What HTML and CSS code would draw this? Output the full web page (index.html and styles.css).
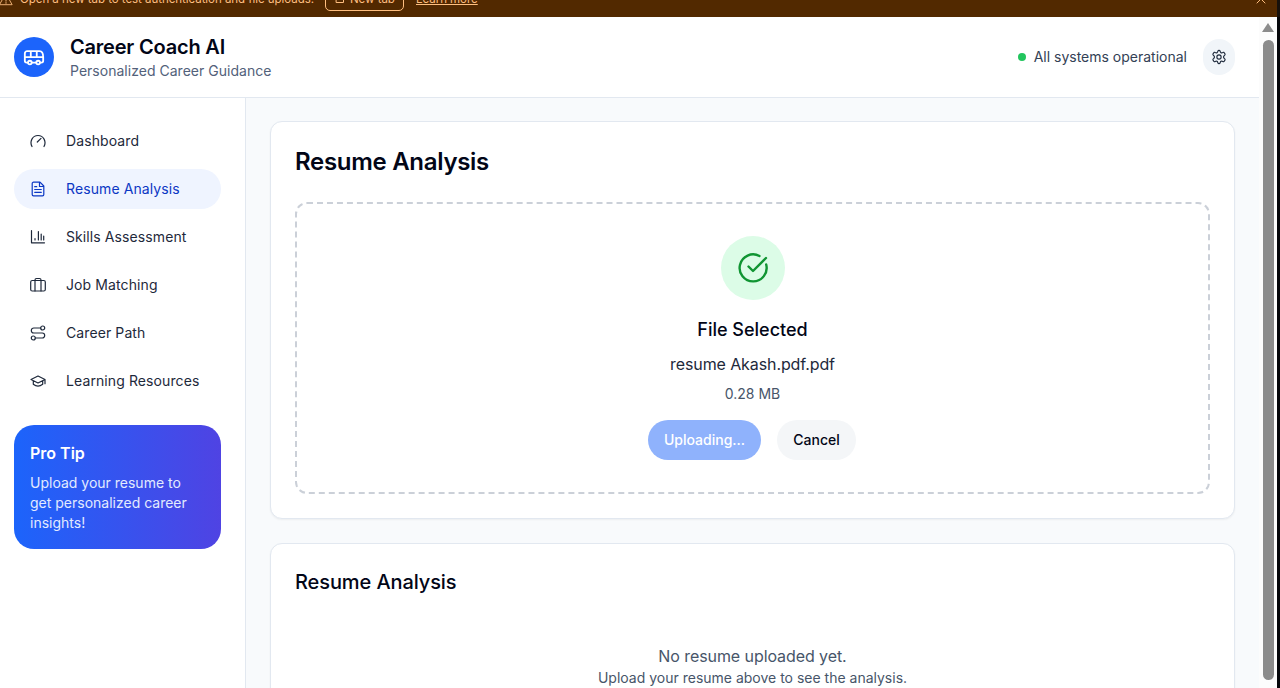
FILE: index.html
```html
<!DOCTYPE html>
<html lang="en">
<head>
<meta charset="utf-8">
<title>Career Coach AI</title>
<link rel="stylesheet" href="styles.css">
</head>
<body>
<div class="screen">
  <div class="banner">
    <div class="banner-row">
      <svg class="banner-warn" viewBox="0 0 16 16"><path d="M8 2 15 14.500H1ZM8 6.500v4M8 12v1"/></svg>
      <span class="banner-text">Open a new tab to test authentication and file uploads.</span>
      <span class="banner-button"><svg viewBox="0 0 10 10"><path d="M1.500 1.500h7v7h-7z"/></svg><span>New tab</span></span>
      <a class="banner-link">Learn more</a>
      <svg class="banner-close" viewBox="0 0 10 10"><path d="m1 1 8 8M9 1 1 9"/></svg>
    </div>
  </div>
  <div class="viewport">
    <div class="page">
      <header class="header">
        <div class="logo"><svg viewBox="0 0 24 24"><path d="M5.500 17H4a2 2 0 0 1-2-2V7a2.500 2.500 0 0 1 2.500-2.500H18c2.500 0 4 3 4 6.500v4a2 2 0 0 1-2 2h-1.500M9.500 17h5M2 11h20M8.500 4.500V11M15 4.500V11"/><circle cx="7.500" cy="17" r="2"/><circle cx="16.500" cy="17" r="2"/></svg></div>
        <div class="brand"><div class="brand-name">Career Coach AI</div><div class="brand-sub">Personalized Career Guidance</div></div>
        <span class="status-dot"></span>
        <span class="status">All systems operational</span>
        <button class="settings"><svg viewBox="0 0 24 24"><path d="M10.300 3.200a1.800 1.800 0 0 1 3.400 0l.3 1a1.900 1.900 0 0 0 2.700 1.500l1-.5a1.700 1.700 0 0 1 2.400.7l.8 1.400a1.800 1.800 0 0 1-.5 2.300l-.7.600a2.300 2.300 0 0 0 0 3.600l.7.600a1.800 1.800 0 0 1 .5 2.300l-.8 1.400a1.700 1.700 0 0 1-2.400.7l-1-.5a1.900 1.900 0 0 0-2.700 1.500l-.3 1a1.800 1.800 0 0 1-3.400 0l-.3-1a1.900 1.900 0 0 0-2.700-1.500l-1 .5a1.700 1.700 0 0 1-2.400-.7l-.8-1.400a1.800 1.800 0 0 1 .5-2.300l.7-.6a2.300 2.300 0 0 0 0-3.600l-.7-.6a1.800 1.800 0 0 1-.5-2.300l.8-1.400a1.700 1.700 0 0 1 2.400-.7l1 .5A1.900 1.900 0 0 0 10 4.200z"/><circle cx="12" cy="12" r="3.200"/></svg></button>
      </header>
      <div class="body">
        <aside class="sidebar">
          <nav class="nav">
            <a class="nav-item"><svg viewBox="0 0 16 16"><path d="M2 13.500C-.7 8.500 2.500 2.500 8 2.500s8.700 6 6 11M7.300 9l3.700-3.700"/></svg><span>Dashboard</span></a>
            <a class="nav-item active"><svg viewBox="0 0 16 16"><path d="M10 1.200H3.500a1.300 1.300 0 0 0-1.300 1.300v11a1.300 1.300 0 0 0 1.300 1.300h9a1.300 1.300 0 0 0 1.300-1.300V5L10 1.200M9.500 1.200V5.500h4.300M4.700 5.700h2M4.700 8.500h6.600M4.700 11.300h6.600"/></svg><span>Resume Analysis</span></a>
            <a class="nav-item"><svg viewBox="0 0 16 16"><path d="M1.500 1.500v12.300h13M5 11V9.500M8.400 11V2.500M11.200 11V5M13.700 11V7"/></svg><span>Skills Assessment</span></a>
            <a class="nav-item"><svg viewBox="0 0 16 16"><rect x=".7" y="3.500" width="14.600" height="10.500" rx="1.500"/><path d="M5 14V3a1.500 1.500 0 0 1 1.500-1.500h3A1.500 1.500 0 0 1 11 3v11"/></svg><span>Job Matching</span></a>
            <a class="nav-item"><svg viewBox="0 0 16 16"><circle cx="12.700" cy="3" r="2"/><circle cx="3.300" cy="13" r="2"/><path d="M10.700 3H3.800a2.500 2.500 0 0 0 0 5h8.400a2.500 2.500 0 0 1 0 5H5.300"/></svg><span>Career Path</span></a>
            <a class="nav-item"><svg viewBox="0 0 16 16"><path d="M1 6.500 8 3l7 3.500L8 10ZM3.300 7.800v3.400Q8 15 12.700 11.200V7.800M15 6.500v4.200"/></svg><span>Learning Resources</span></a>
          </nav>
          <div class="tip"><div class="tip-title">Pro Tip</div><p class="tip-text">Upload your resume to get personalized career insights!</p></div>
        </aside>
        <main class="main">
          <section class="card">
            <h2 class="card-title">Resume Analysis</h2>
            <div class="dropzone">
              <div class="check"><svg viewBox="0 0 32 32"><path d="M22.500 4A13.500 13.500 0 1 0 29.200 12.500M11.500 14.500l4.500 4.500L29 6"/></svg></div>
              <div class="file-title">File Selected</div>
              <div class="file-name">resume Akash.pdf.pdf</div>
              <div class="file-size">0.28 MB</div>
              <div class="actions"><button class="button uploading">Uploading...</button><button class="button cancel">Cancel</button></div>
            </div>
          </section>
          <section class="card results">
            <h3 class="results-title">Resume Analysis</h3>
            <div class="empty-title">No resume uploaded yet.</div>
            <div class="empty-text">Upload your resume above to see the analysis.</div>
          </section>
        </main>
      </div>
    </div>
    <div class="scrollbar"><span class="scroll-up"></span><span class="scroll-thumb"></span></div>
    <div class="edge"></div>
  </div>
</div>
</body>
</html>
```

FILE: styles.css
```css
* { box-sizing: border-box; }
body { margin: 0; font-family: Inter, sans-serif; color: #020617; background: #fff; overflow: hidden; }
svg { display: block; flex: none; fill: none; stroke: currentColor; stroke-linecap: round; stroke-linejoin: round; }
button { border: 0; padding: 0; font: inherit; }
h2, h3, p { margin: 0; }
.screen { display: flex; flex-direction: column; height: 688px; overflow: hidden; }
.banner { height: 17px; flex: none; overflow: hidden; background: #522900; color: #ffbf80; display: flex; align-items: flex-end; border-right: 3px solid #17110c; }
.banner-row { display: flex; flex: 1; height: 36px; align-items: center; font-size: 11.500px; letter-spacing: -.04px; }
.banner-warn { width: 14px; height: 14px; margin-left: -1px; }
.banner-text { margin-left: 7px; width: 294px; white-space: nowrap; }
.banner-button { margin-left: 11px; display: flex; align-items: center; gap: 5px; width: 79px; height: 24px; padding-left: 9px; border: 1px solid #ffbf80; border-radius: 5px; white-space: nowrap; }
.banner-button svg { width: 10px; height: 10px; }
.banner-link { margin-left: 12px; text-decoration: underline; }
.banner-close { width: 10px; height: 10px; margin-left: auto; margin-right: 11px; }
.viewport { display: flex; flex: 1; min-height: 0; }
.page { display: flex; flex-direction: column; flex: 1; min-width: 0; }
.header { height: 81px; flex: none; display: flex; align-items: center; padding: 0 24px 0 14px; border-bottom: 1px solid #e2e8f0; }
.logo { width: 40px; height: 40px; border-radius: 50%; background: #1c64fb; color: #fff; display: grid; place-items: center; }
.logo svg { width: 24px; height: 24px; padding-top: 2px; stroke-width: 2; }
.brand { margin-left: 16px; flex: 1; }
.brand-name { font-size: 20px; font-weight: 630; line-height: 28px; letter-spacing: -.2px; }
.brand-sub { font-size: 14px; line-height: 20px; color: #52617a; letter-spacing: .02px; }
.status-dot { width: 8px; height: 8px; border-radius: 50%; background: #22c55e; }
.status { margin-left: 8px; font-size: 14px; line-height: 20px; color: #334155; padding-bottom: 1px; }
.settings { margin-left: 16px; width: 32px; height: 36px; border-radius: 16px; background: #f1f5f9; color: #1e293b; display: grid; place-items: center; }
.settings svg { width: 16px; height: 16px; stroke-width: 1.700; }
.body { display: flex; flex: 1; min-height: 0; }
.sidebar { width: 246px; flex: none; border-right: 1px solid #e2e8f0; padding: 23px 24px 0 14px; }
.nav { display: flex; flex-direction: column; gap: 8px; }
.nav-item { height: 40px; border-radius: 20px; padding-left: 16px; display: flex; align-items: center; gap: 20px; font-size: 14px; line-height: 20px; color: #1e293b; letter-spacing: .1px; }
.nav-item span { padding-bottom: 1px; }
.nav-item svg { width: 16px; height: 16px; stroke-width: 1.200; }
.active { background: #eff4ff; color: #0b37c4; }
.tip { margin-top: 24px; height: 124px; padding: 16px; border-radius: 20px; background: linear-gradient(90deg, #1c64fb, #4f43e3); color: #fff; }
.tip-title { font-size: 16px; font-weight: 600; line-height: 24px; }
.tip-text { margin-top: 8px; font-size: 14px; line-height: 20px; color: #e2eaff; }
.main { flex: 1; min-width: 0; background: #f8fafc; padding: 23px 24px 0; display: flex; flex-direction: column; gap: 24px; overflow: hidden; }
.card { height: 398px; flex: none; padding: 24px; border: 1px solid #e2e8f0; border-radius: 12px; background: #fff; box-shadow: 0 1px 2px #0000000d; }
.card-title { font-size: 24px; font-weight: 630; line-height: 32px; letter-spacing: -.3px; }
.dropzone { margin-top: 24px; height: 292px; border: 2px dashed #cbd0d8; border-radius: 12px; padding-top: 32px; display: flex; flex-direction: column; align-items: center; }
.check { width: 64px; height: 64px; flex: none; border-radius: 50%; background: #dcfce7; color: #119533; display: grid; place-items: center; }
.check svg { width: 32px; height: 32px; stroke-width: 2.400; }
.file-title { margin-top: 16px; font-size: 18px; font-weight: 500; line-height: 28px; }
.file-name { margin-top: 8px; font-size: 16px; line-height: 24px; color: #1e293b; letter-spacing: -.1px; }
.file-size { margin-top: 8px; font-size: 14px; line-height: 20px; color: #475569; }
.actions { margin-top: 16px; margin-right: 1px; display: flex; gap: 16px; }
.button { height: 40px; border-radius: 20px; font-size: 14px; line-height: 20px; font-weight: 500; padding-bottom: 1px; }
.uploading { width: 113px; background: #8fb2fc; color: #fff; }
.cancel { width: 79px; background: #f4f6f8; color: #020617; }
.results-title { font-size: 20px; font-weight: 500; line-height: 28px; letter-spacing: -.1px; }
.empty-title { margin-top: 48px; text-align: center; font-size: 16px; line-height: 24px; color: #475569; letter-spacing: -.08px; }
.empty-text { text-align: center; font-size: 14px; line-height: 20px; color: #475569; }
.scrollbar { width: 18px; flex: none; background: #fcfcfc; padding-top: 6px; display: flex; flex-direction: column; align-items: center; }
.scroll-up { border: 6px solid transparent; border-top: 0; border-bottom: 9px solid #8b8b8b; }
.scroll-thumb { margin-top: 8px; width: 11px; height: 640px; border-radius: 6px; background: #8b8b8b; }
.edge { width: 3px; flex: none; background: #06070b; }
```
